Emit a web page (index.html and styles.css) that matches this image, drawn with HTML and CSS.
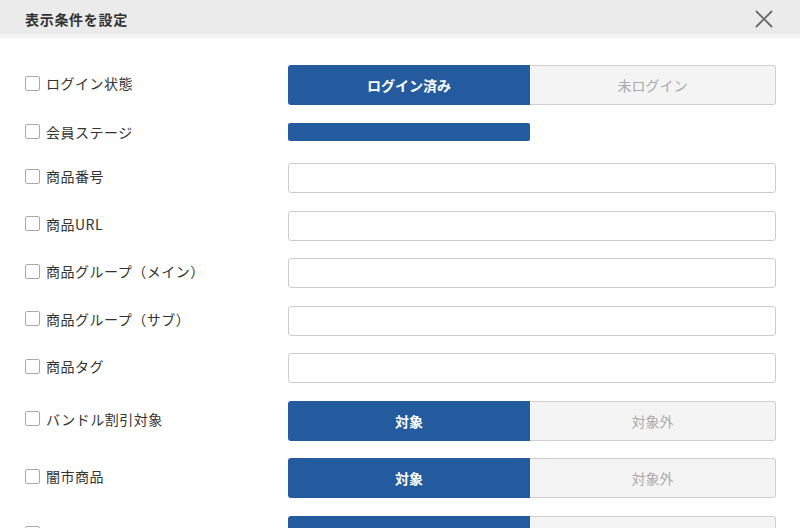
FILE: index.html
```html
<!DOCTYPE html>
<html lang="ja">
<head>
<meta charset="utf-8">
<title>表示条件を設定</title>
<link rel="stylesheet" href="styles.css">
</head>
<body>
<div class="modal">
  <div class="modal-header">
    <h1 class="modal-title">表示条件を設定</h1>
    <button class="close-btn" aria-label="閉じる">
      <svg width="18" height="18" viewBox="0 0 18 18"><path d="M1.5 1.5 L16.5 16.5 M16.5 1.5 L1.5 16.5" stroke="#6b6b6b" stroke-width="1.8" fill="none" stroke-linecap="round"/></svg>
    </button>
  </div>
  <div class="modal-body">
    <div class="row row-toggle">
      <label class="cond"><span class="cb"></span>ログイン状態</label>
      <div class="toggle"><span class="opt on">ログイン済み</span><span class="opt off">未ログイン</span></div>
    </div>
    <div class="row row-bar">
      <label class="cond"><span class="cb"></span>会員ステージ</label>
      <div class="ctrl"><div class="stage-bar"></div></div>
    </div>
    <div class="row row-input">
      <label class="cond"><span class="cb"></span>商品番号</label>
      <input class="text" type="text">
    </div>
    <div class="row row-input">
      <label class="cond"><span class="cb"></span>商品URL</label>
      <input class="text" type="text">
    </div>
    <div class="row row-input">
      <label class="cond"><span class="cb"></span>商品グループ（メイン）</label>
      <input class="text" type="text">
    </div>
    <div class="row row-input">
      <label class="cond"><span class="cb"></span>商品グループ（サブ）</label>
      <input class="text" type="text">
    </div>
    <div class="row row-input">
      <label class="cond"><span class="cb"></span>商品タグ</label>
      <input class="text" type="text">
    </div>
    <div class="row row-toggle">
      <label class="cond"><span class="cb"></span>バンドル割引対象</label>
      <div class="toggle"><span class="opt on">対象</span><span class="opt off">対象外</span></div>
    </div>
    <div class="row row-toggle">
      <label class="cond"><span class="cb"></span>闇市商品</label>
      <div class="toggle"><span class="opt on">対象</span><span class="opt off">対象外</span></div>
    </div>
    <div class="row row-toggle">
      <label class="cond"><span class="cb"></span></label>
      <div class="toggle"><span class="opt on"></span><span class="opt off"></span></div>
    </div>
  </div>
</div>
</body>
</html>
```
FILE: styles.css
```css
html, body {
  margin: 0;
  padding: 0;
  width: 800px;
  height: 528px;
  overflow: hidden;
  background: #fff;
  font-family: "Noto Sans CJK JP", "Noto Sans", "Liberation Sans", sans-serif;
  color: #333;
}
.modal {
  width: 800px;
}
.modal-header {
  height: 34px;
  background: #ebebeb;
  border-bottom: 4px solid #f3f3f3;
  display: flex;
  align-items: center;
  justify-content: space-between;
  padding: 0 27px 0 25px;
}
.modal-title {
  margin: 0;
  font-size: 14px;
  letter-spacing: 0.7px;
  font-weight: 700;
  color: #333;
  line-height: 1;
  padding-top: 4px;
}
.close-btn {
  border: 0;
  background: transparent;
  padding: 0;
  width: 18px;
  height: 18px;
  display: flex;
  margin-top: 4px;
}
.modal-body {
  padding: 27px 24px 0 25px;
  display: flex;
  flex-direction: column;
  gap: 17.5px;
}
.row {
  display: grid;
  grid-template-columns: 263px 488px;
  align-items: center;
}
.row-toggle { height: 40px; }
.row-bar { height: 23px; align-items: start; }
.row-input { height: 30px; }
.cond {
  display: flex;
  align-items: center;
  font-size: 14px;
  letter-spacing: 0.5px;
  color: #333;
  line-height: 20px;
  min-height: 20px;
  margin-bottom: 4px;
}
.row-bar .cond { margin-bottom: 0; margin-top: -1px; }
.cb {
  width: 13px;
  height: 13px;
  border: 1.5px solid #a9a9a9;
  border-radius: 2px;
  background: #fff;
  margin-right: 6px;
  flex: none;
}
.toggle {
  display: flex;
  height: 40px;
  font-size: 14px;
}
.opt {
  flex: 1;
  display: flex;
  align-items: center;
  justify-content: center;
  box-sizing: border-box;
}
.opt.on {
  background: #235b9e;
  color: #fff;
  font-weight: 700;
  border-radius: 3px 0 0 3px;
  flex-basis: 242px;
  flex-grow: 0;
}
.opt.off {
  background: #f4f4f4;
  color: #aaa;
  border: 1px solid #cfcfcf;
  border-left: 0;
  border-radius: 0 3px 3px 0;
}
.ctrl { height: 23px; }
.stage-bar {
  width: 242px;
  height: 18px;
  background: #235b9e;
  border-radius: 2px;
}
.text {
  height: 30px;
  box-sizing: border-box;
  border: 1px solid #cccccc;
  border-radius: 3px;
  background: #fff;
  padding: 0 8px;
  margin: 0;
  width: 488px;
}
```
